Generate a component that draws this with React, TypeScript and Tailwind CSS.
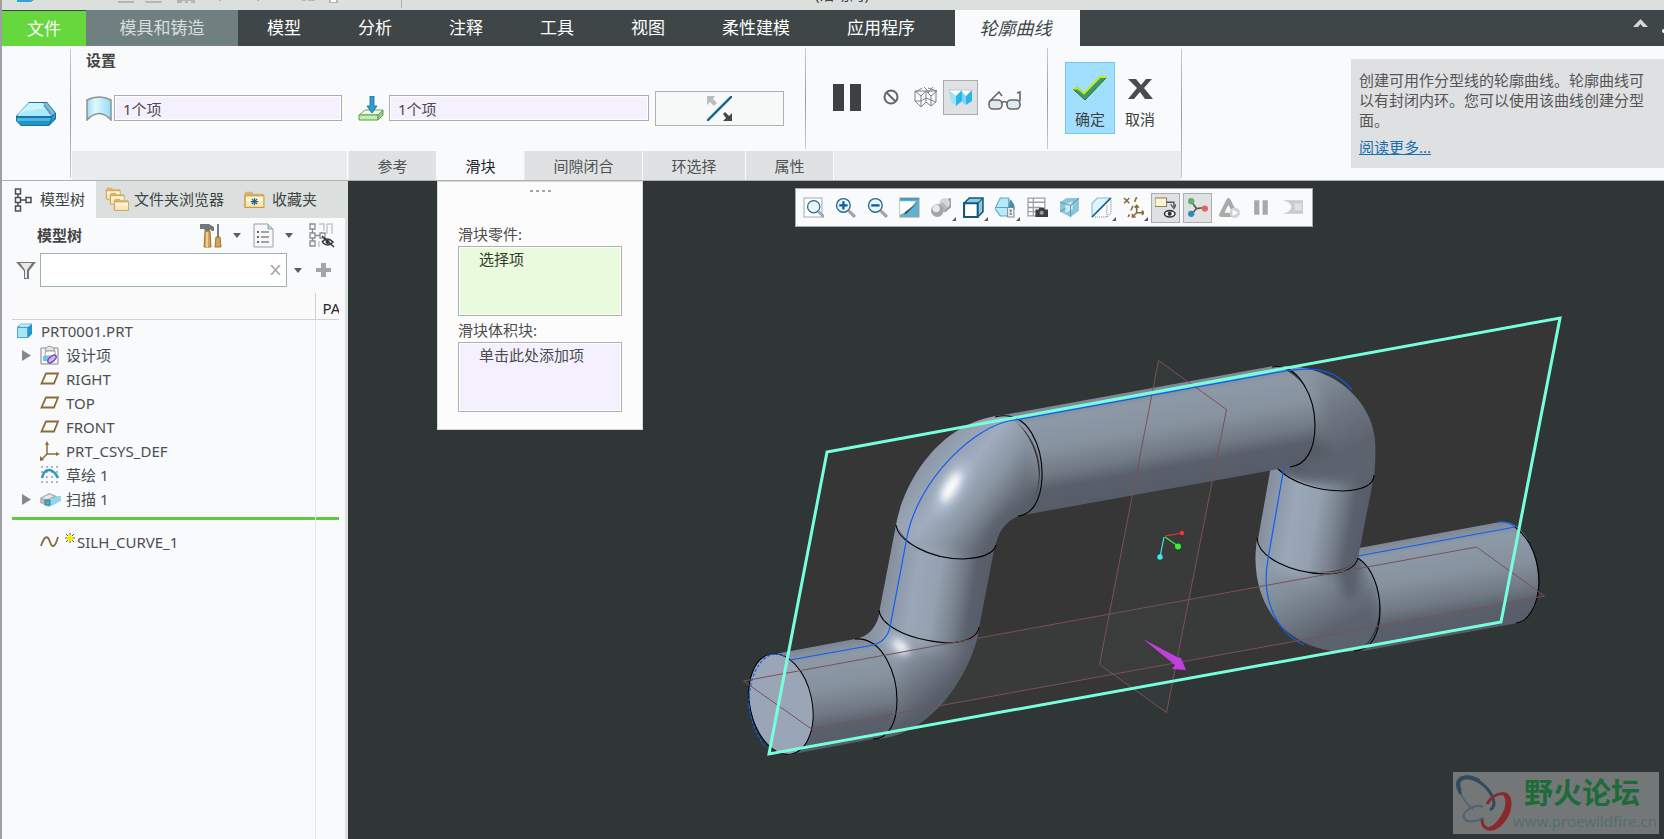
import type { ReactNode } from 'react'

const menuTabs = ['模型', '分析', '注释', '工具', '视图', '柔性建模', '应用程序']

const Separator = ({ className = '' }: { className?: string }) => (
    <div className={`w-px shrink-0 bg-gradient-to-b from-[#c9cbcd] via-[#97999b] to-[#c9cbcd] ${className}`} />
)

const Caret = () => (
    <svg width="8" height="5" viewBox="0 0 8 5"><path d="M0 0h8L4 5z" fill="#5c5c5c" /></svg>
)

const TitleStrip = () => (
    <div className="relative h-[10px] shrink-0 overflow-hidden bg-[#dbe0df]">
        <svg width="420" height="10" viewBox="2 0 420 10" className="absolute left-0 top-0">
            <path d="M17 0h17l-3 2H17z" fill="#2fa4d6" />
            <g fill="#b4b6b6">
                <path d="M118 1h16v2h-16zM145 1h17v1l-2 1h-13l-2-1zM177 0h18v3h-4V1h-3v2h-3V1h-3v2h-5zM302 0h4v1h-4zM308 0h7v1h-7zM329 0h9v3h-9z" />
                <path d="M219 0h2v1h-2zM257 0h2v1h-2z" />
            </g>
            <path d="M331 0h5v2h-5z" fill="#fff" />
            <path d="M401.500 0v8" stroke="#a9adad" />
        </svg>
        <div className="absolute -top-[16px] left-1/2 -translate-x-[18px] text-[15px] leading-[20px] text-[#444]">(活动的)</div>
    </div>
)

const MenuBar = () => (
    <nav className="flex h-[36px] shrink-0 bg-[#3e4647] text-[17px] text-white">
        <button className="w-[84px] border-t border-[#3e4647] bg-[#66d73c]">文件</button>
        <button className="w-[152px] bg-[#707f80] text-[#d6dedd]">模具和铸造</button>
        {menuTabs.map(tab => (
            <button key={tab} className="pl-[29px] pr-[28px]">{tab}</button>
        ))}
        <button className="ml-3 w-[125px] bg-[#f8fafc] pr-1 text-[18px] italic text-[#3e4647]">轮廓曲线</button>
        <button aria-label="最小化功能区" className="ml-auto mr-[14px] flex w-[15px] items-start pt-[9px]">
            <svg width="15" height="9" viewBox="0 0 15 9"><path d="M7.500 0L15 8h-5L7.500 5 5 8H0z" fill="#d5d8d8" /></svg>
        </button>
        <svg width="2" height="36" viewBox="0 0 2 36"><circle cx="2" cy="21" r="2" fill="#fff" /></svg>
    </nav>
)

const WedgeIcon = () => (
    <svg width="41" height="26" viewBox="0 0 41 26">
        <path d="M0 15L13 1h18l9 11v6l-7 7H5l-5-5z" fill="#1675a3" />
        <path d="M1 15L13 2h14l8 13z" fill="#abe9fd" />
        <path d="M1 14L13 2h14l4 5-22 3z" fill="#cdf4ff" />
        <path d="M27 2h4l8 10-4 3z" fill="#7fbcd8" />
        <path d="M28 4l7 9" stroke="#5f9cba" strokeWidth="2" />
        <path d="M1 17h34l-3 7H6l-5-4z" fill="#49b8e5" />
        <path d="M2 20h32l-2 4H6z" fill="#2493c4" />
        <path d="M36 16l3-3v4l-4 5z" fill="#3299c6" />
    </svg>
)

const SurfaceIcon = () => (
    <svg width="26" height="25" viewBox="0 0 26 25">
        <defs>
            <linearGradient id="surf">
                <stop offset="0" stopColor="#9fdcf2" />
                <stop offset=".35" stopColor="#e3f8ff" />
                <stop offset="1" stopColor="#8fdcf8" />
            </linearGradient>
        </defs>
        <path d="M1 4q12-6 24 0v20q-12-13-24 0z" fill="url(#surf)" stroke="#8f9293" strokeWidth="1.500" />
    </svg>
)

const PullIcon = () => (
    <svg width="26" height="25" viewBox="0 0 26 25">
        <path d="M1 19l6-5h18l-5 5z" fill="#e8fadf" stroke="#7aa171" />
        <path d="M1 19h19v5H1z" fill="#bff0b2" stroke="#5f9a55" />
        <path d="M20 19l5-5v5l-5 5z" fill="#97cf8c" stroke="#5f9a55" />
        <path d="M12 0h4v10h3l-5 7-5-7h3z" fill="#2f9ed2" stroke="#14648f" strokeWidth=".8" />
    </svg>
)

const Collector = ({ id, label, icon, className }: { id: string; label: string; icon: ReactNode; className: string }) => (
    <div className="mt-1 flex items-center">
        <label htmlFor={id} aria-label={label}>{icon}</label>
        <input
            id={id}
            readOnly
            value="1个项"
            className={`h-[26px] border border-[#abadb0] bg-[#f4f0fd] pl-2 text-[15px] text-[#4c4c4c] shadow-[inset_0_0_0_1px_#fff] outline-none ${className}`}
        />
    </div>
)

const subTabs = [
    { name: '参考', width: 'w-[87px]' },
    { name: '滑块', width: 'w-[87px]', active: true },
    { name: '间隙闭合', width: 'w-[117px]' },
    { name: '环选择', width: 'w-[102px]' },
    { name: '属性', width: 'w-[87px]' },
]

const Controls = () => (
    <div className="flex h-[105px]">
        <div className="w-[733px] pl-[14px] pt-1">
            <h2 className="text-[15px] font-bold leading-[20px] text-[#444]">设置</h2>
            <div className="mt-[21px] flex items-start">
                <Collector id="surface" label="曲面" icon={<SurfaceIcon />} className="ml-[2px] w-[228px]" />
                <div className="w-4" />
                <Collector id="direction" label="方向" icon={<PullIcon />} className="ml-[5px] w-[260px]" />
                <button aria-label="反向" className="ml-[6px] flex h-[35px] w-[129px] items-center justify-center border border-[#b0b1b2] bg-[#f7f8f8]">
                    <svg width="25" height="25" viewBox="0 0 25 25">
                        <path d="M0 25L25 0" stroke="#16688f" strokeWidth="2.500" />
                        <path d="M0 0h8L6 3l4 4-3 3-4-4-3 3z" fill="#bcbcbc" />
                        <path d="M25 25h-9l3-3-3-4 2-2 4 4 3-3z" fill="#464646" />
                    </svg>
                </button>
            </div>
        </div>
        <Separator className="my-[2px]" />
        <div className="flex w-[241px] items-start pl-[27px]">
            <button aria-label="暂停" className="mt-[38px]">
                <svg width="29" height="27" viewBox="0 0 29 27"><path d="M0 0h11v27H0zM17 0h11v27H17z" fill="#3e4041" /></svg>
            </button>
            <button aria-label="无预览" className="ml-[21px] mt-[43px]">
                <svg width="16" height="16" viewBox="0 0 16 16" fill="none" stroke="#666" strokeWidth="2">
                    <circle cx="8" cy="8" r="6.500" /><path d="M3.500 3.500l9 9" />
                </svg>
            </button>
            <button aria-label="线框预览" className="ml-[14px] mt-[41px]">
                <svg width="25" height="21" viewBox="0 0 25 21" fill="none" stroke="#808080" strokeWidth="1">
                    <path d="M2 4l6 5 5-5 5 5 6-5M2 4v10l6 6 5-5V4M8 9v11M13 15l5 4 5-4V4M18 9v10M2 4h22M9 1l-6 4M15 1l9 3M11 0l5 5M20 0l-5 6M2 14h6l5-3 10 4" />
                </svg>
            </button>
            <button aria-label="着色预览" aria-pressed="true" className="ml-[5px] mt-[34px] flex h-[35px] w-[35px] items-center justify-center border border-[#a9abad] bg-[#dfe1e3]">
                <svg width="24" height="18" viewBox="0 0 24 18">
                    <path d="M0 1h13l-6 6z" fill="#fff" /><path d="M0 1l7 6v10l-5-4z" fill="#9be2fb" />
                    <path d="M7 7l6-6v11l-6 5z" fill="#2fb4ea" />
                    <path d="M12 1h12l-7 6z" fill="#fff" /><path d="M13 3l4 4v9l-4-3z" fill="#7fd5f5" />
                    <path d="M17 7l6-6v11l-6 4z" fill="#2fb4ea" />
                    <path d="M0 1h24" stroke="#c0c6ca" />
                </svg>
            </button>
            <button aria-label="校验" className="ml-[10px] mt-[45px]">
                <svg width="34" height="19" viewBox="0 0 34 19" fill="none" stroke="#666" strokeWidth="1.600">
                    <rect x="1" y="9" width="13" height="9" rx="4" fill="#dfe9f0" />
                    <rect x="19" y="9" width="13" height="9" rx="4" fill="#dfe9f0" />
                    <path d="M1 11L11 1l3 4M32 10V1l-3 1M14 12q2.500-3 5 0" />
                </svg>
            </button>
        </div>
        <Separator className="my-[2px]" />
        <div className="flex items-start pl-[17px] pt-4 text-[15px] leading-[20px] text-[#3d3f40]">
            <button className="flex h-[72px] w-[50px] flex-col items-center border border-[#6ccbf8] bg-[#a2dffe] pt-[13px]">
                <svg width="36" height="25" viewBox="0 0 36 25">
                    <path d="M1 13l5-1 6 5L28 1l7 0L13 24z" fill="#3c9a63" stroke="#276d45" />
                    <path d="M1 12.500h5l6 5L28 1h7" fill="none" stroke="#c6e91a" strokeWidth="1.800" />
                </svg>
                <span className="mt-2">确定</span>
            </button>
            <button className="flex h-[72px] w-[50px] flex-col items-center pt-[17px]">
                <svg width="25" height="20" viewBox="0 0 25 20"><path d="M0 0h8l5 6 5-6h6l-8 9 9 11h-8l-5-7-6 7H0l9-11z" fill="#4b4c4d" /></svg>
                <span className="mt-[10px]">取消</span>
            </button>
        </div>
    </div>
)

const Ribbon = () => (
    <div className="flex h-[135px] shrink-0 border-b border-[#abb3b4] bg-[#f8fafc]">
        <div className="flex w-[68px] items-center justify-center pt-[2px]">
            <WedgeIcon />
        </div>
        <Separator className="mb-[2px] mt-[3px]" />
        <div className="ml-px flex w-[1109px] flex-col">
            <Controls />
            <div className="flex flex-1 gap-px bg-[#e9ebed] text-[15px] text-[#505254]">
                <div className="w-[276px] border-r border-white" />
                {subTabs.map(tab => (
                    <button
                        key={tab.name}
                        className={`${tab.width} pt-[2px] ${tab.active ? 'bg-[#f8fafc] text-[#222]' : 'bg-[#dfe1e3] shadow-[1px_0_0_#f8fafc]'}`}
                    >
                        {tab.name}
                    </button>
                ))}
            </div>
        </div>
        <Separator className="mb-[2px] mt-[3px]" />
        <aside className="ml-auto mt-[13px] h-[109px] w-[313px] bg-[#dfe0e2] pl-2 pr-5 pt-[11px] text-[15px] leading-[20px] text-[#555]">
            <p>创建可用作分型线的轮廓曲线。轮廓曲线可以有封闭内环。您可以使用该曲线创建分型面。</p>
            <a href="#more" className="mt-[7px] block text-[#1a70ae] underline">阅读更多...</a>
        </aside>
    </div>
)

const Folder = ({ children }: { children?: ReactNode }) => (
    <>
        <path d="M1 3l2-2h6l1 2h10v13H1z" fill="#d9b36c" />
        <path d="M2 5h18v11H2z" fill="#fbe6b4" stroke="#c39c58" />
        <path d="M3 6h16v4H3z" fill="#fff4d6" />
        {children}
    </>
)

const PlaneIcon = () => (
    <svg width="20" height="14" viewBox="0 0 20 14"><path d="M6 1.500h12l-4 10H1.500z" fill="none" stroke="#8a6c38" strokeWidth="1.800" /></svg>
)

const CsysIcon = () => (
    <svg width="20" height="20" viewBox="0 0 20 20" fill="#8a6c38" stroke="#8a6c38">
        <path d="M7 2v11h11M7 13l-5 5" fill="none" strokeWidth="1.500" />
        <path d="M7 0l2 4H5zM20 13l-4 2v-4zM0 20v-5l4 4z" stroke="none" />
    </svg>
)

const DesignIcon = () => (
    <svg width="20" height="20" viewBox="0 0 20 20">
        <rect x="1" y="3" width="17" height="16" rx="1" fill="#fafafa" stroke="#a9a9a9" strokeWidth="1.500" />
        <path d="M5 6q0-4 5-5 4 1 5 5z" fill="#e5e5e5" stroke="#9a9a9a" />
        <path d="M5 8l2-2h8v5H5z" fill="#fff" stroke="#888" strokeWidth=".8" />
        <path d="M3 11h9l-2 5H3z" fill="#69c4ea" />
        <ellipse cx="12" cy="14" rx="5" ry="2.500" transform="rotate(-40 12 14)" fill="#d2b8ee" stroke="#7653b8" strokeWidth="1.500" />
    </svg>
)

const SketchIcon = () => (
    <svg width="20" height="18" viewBox="0 0 20 18">
        <g fill="#b5b5b5">
            {[1, 6, 11, 16].map(x => [0, 5, 10, 15].map(y => <rect key={`${x}-${y}`} x={x} y={y} width="2" height="2" />))}
        </g>
        <path d="M2 12Q4 4 9 4q5 0 9 8" fill="none" stroke="#2f97c8" strokeWidth="2.500" />
    </svg>
)

const SweepIcon = () => (
    <svg width="21" height="15" viewBox="0 0 21 15">
        <path d="M0 6l9-5 8 3v7l-8 4-9-4z" fill="#b6babc" />
        <path d="M1 6l8-4 6 2-8 4z" fill="#e6e8e9" stroke="#999" strokeWidth=".7" />
        <path d="M9 7l6-1 2-2h4v5l-11 5z" fill="#8fd6ee" />
        <path d="M5 8h5v5H5z" fill="#58aacb" stroke="#317e9f" />
    </svg>
)

const CurveIcon = () => (
    <svg width="20" height="12" viewBox="0 0 20 12"><path d="M1 10C5-2 8 0 10 6s5 6 8-5" fill="none" stroke="#8a6c38" strokeWidth="1.800" /></svg>
)

const treeItems: { name: string; icon: ReactNode; open?: boolean }[] = [
    { name: '设计项', icon: <DesignIcon />, open: false },
    { name: 'RIGHT', icon: <PlaneIcon /> },
    { name: 'TOP', icon: <PlaneIcon /> },
    { name: 'FRONT', icon: <PlaneIcon /> },
    { name: 'PRT_CSYS_DEF', icon: <CsysIcon /> },
    { name: '草绘 1', icon: <SketchIcon /> },
    { name: '扫描 1', icon: <SweepIcon />, open: false },
]

const ModelTree = () => (
    <table className="ml-[10px] mr-[6px] w-[327px] table-fixed border-collapse text-left text-[15px] leading-[20px] text-[#4c4e50]">
        <thead>
            <tr className="h-[26px] border-b border-[#cfd2d3] bg-[#fafafa]">
                <th className="w-[303px] border-r border-[#cfd2d3]" aria-label="名称" />
                <th className="overflow-hidden whitespace-nowrap p-0 pl-[7px] pt-1 font-normal text-[#2a2a2a]">PA</th>
            </tr>
        </thead>
        <tbody>
            <tr className="h-6">
                <td className="border-r border-[#e6e9eb] p-0">
                    <div className="flex items-center gap-2 pl-1">
                        <svg width="17" height="16" viewBox="0 0 17 16">
                            <path d="M1 4l4-3h11v10l-4 4H1z" fill="#2397cb" />
                            <path d="M1.500 4.500h10v10h-10z" fill="#a5e6fb" stroke="#4aa9d0" /><path d="M2 4l3-3h11l-4 3z" fill="#d5f5ff" stroke="#4a9fc2" strokeWidth=".7" />
                        </svg>
                        <span>PRT0001.PRT</span>
                    </div>
                </td>
                <td />
            </tr>
            {treeItems.map(item => (
                <tr key={item.name} className="h-6">
                    <td className="border-r border-[#e6e9eb] p-0">
                        <div className="flex items-center">
                            <div className="flex w-7 pl-[10px]">
                                {item.open === false && (
                                    <button aria-label={`展开 ${item.name}`}>
                                        <svg width="9" height="11" viewBox="0 0 9 11"><path d="M0 0l9 5.500L0 11z" fill="#858789" /></svg>
                                    </button>
                                )}
                            </div>
                            <div className="w-[26px]">{item.icon}</div>
                            <span>{item.name}</span>
                        </div>
                    </td>
                    <td />
                </tr>
            ))}
            <tr className="h-[19px] align-top">
                <td className="border-r border-[#e6e9eb] p-0 pt-[6px]"><div className="h-[3px] bg-[#62c93f]" /></td>
                <td className="p-0 pt-[6px]"><div className="h-[3px] bg-[#62c93f]" /></td>
            </tr>
            <tr className="h-6">
                <td className="border-r border-[#e6e9eb] p-0">
                    <div className="flex items-center pl-7">
                        <CurveIcon />
                        <svg width="10" height="10" viewBox="0 0 10 10" className="mb-2 ml-[5px] mr-[2px]">
                            <path d="M5 0v10M0 5h10M1 1l8 8M9 1L1 9" stroke="#555" strokeWidth="1" />
                            <circle cx="5" cy="5" r="3" fill="#ffee00" />
                        </svg>
                        <span>SILH_CURVE_1</span>
                    </div>
                </td>
                <td />
            </tr>
        </tbody>
    </table>
)

const Sidebar = () => (
    <aside className="flex w-[346px] shrink-0 flex-col border-r-[3px] border-[#dbe0df] bg-[#f8fafc]">
        <div className="flex h-[37px] bg-[#dbe0df] text-[15px] text-[#3f4445]">
            <button className="flex w-[94px] items-center bg-[#f8fafc] pl-3">
                <svg width="18" height="24" viewBox="0 0 18 24" fill="none" stroke="#4c4e50" strokeWidth="1.500">
                    <path d="M1.500 1h5v5h-5zM1.500 9.500h5v5h-5zM1.500 18h5v5h-5zM12 9.500h5v5h-5zM4 6v3.500M4 14.500V18M6.500 12H12" />
                </svg>
                <span className="ml-2">模型树</span>
            </button>
            <button className="flex items-center pl-[9px]">
                <svg width="25" height="25" viewBox="0 0 25 25">
                    <g transform="scale(.76)"><Folder /></g>
                    <g transform="translate(4 5) scale(.76)"><Folder /></g>
                    <g transform="translate(8 11) scale(.78)"><Folder /></g>
                </svg>
                <span className="ml-1">文件夹浏览器</span>
            </button>
            <button className="flex items-center pl-[19px]">
                <svg width="22" height="19" viewBox="0 0 21 17">
                    <Folder><path d="M11 7v7M7.500 10.500h7M8.500 8l5 5M13.500 8l-5 5" stroke="#1e6b8b" strokeWidth="1.100" /></Folder>
                </svg>
                <span className="ml-[7px]">收藏夹</span>
            </button>
        </div>
        <div className="flex h-[35px] items-center pl-[35px]">
            <h2 className="text-[15px] font-bold text-[#444]">模型树</h2>
            <div className="ml-auto mr-[10px] flex items-center">
                <button aria-label="设置">
                    <svg width="22" height="26" viewBox="0 0 22 26">
                        <path d="M0 1h9l5 3v4h-2l-2-2v2H5L4 6H0z" fill="#73777b" />
                        <path d="M5 8h5l1 16H4z" fill="#d3a55b" stroke="#9a763a" />
                        <path d="M6 9h2v15H6z" fill="#edcd90" />
                        <path d="M17 1h2v13h-2z" fill="#7b7f82" />
                        <path d="M16 14h4l1 10h-6z" fill="#d3a55b" stroke="#9a763a" />
                    </svg>
                </button>
                <button aria-label="设置菜单" className="ml-[11px]"><Caret /></button>
                <button aria-label="显示" className="ml-3">
                    <svg width="22" height="25" viewBox="0 0 22 25">
                        <path d="M1 1h14l5 5v18H1z" fill="#f5f7f8" stroke="#9ba1a3" />
                        <path d="M15 1v5h5" fill="#a5d5e8" stroke="#9ba1a3" />
                        <path d="M8 9h8M8 14h8M8 19h8" stroke="#888" strokeWidth="1.500" />
                        <path d="M4 8h2v2H4zM4 13h2v2H4zM4 18h2v2H4z" fill="#666" />
                    </svg>
                </button>
                <button aria-label="显示菜单" className="ml-[10px]"><Caret /></button>
                <button aria-label="树列" className="ml-4">
                    <svg width="26" height="25" viewBox="0 0 26 25" fill="none">
                        <path d="M1 1h5v5H1zM1 10h5v5H1zM1 18h5v5H1zM11 10h5v5h-5zM3.500 6v4M3.500 15v3M6 12.500h5" stroke="#8a8c8e" strokeWidth="1.300" />
                        <path d="M10 1h5v7M10 18v6M18 1h5v10M18 1v10" stroke="#c6c8ca" strokeWidth="1.500" />
                        <path d="M13 19q5-6 11 0-5 6-11 0M13 13l12 11" stroke="#333" strokeWidth="1.500" />
                        <circle cx="18.500" cy="19" r="2" fill="#333" />
                    </svg>
                </button>
            </div>
        </div>
        <div className="flex h-[34px] items-center pl-[14px]">
            <svg width="20" height="18" viewBox="0 0 20 18">
                <path d="M0 1h20l-7 9v8H8v-8z" fill="#777" /><path d="M4 2h12l-5 7v8H9V9z" fill="#e9e9e9" />
            </svg>
            <div className="relative ml-1">
                <input aria-label="筛选" className="block h-[34px] w-[247px] border border-[#9fb0b1] bg-white px-2 pr-8 text-[15px] outline-none" />
                <button aria-label="清除" className="absolute right-[6px] top-3 flex">
                    <svg width="11" height="10" viewBox="0 0 11 10"><path d="M1 0l9 10M10 0L1 10" stroke="#aaa" strokeWidth="1.800" /></svg>
                </button>
            </div>
            <button aria-label="筛选选项" className="ml-[7px]"><Caret /></button>
            <button aria-label="添加" className="ml-[14px]">
                <svg width="15" height="14" viewBox="0 0 15 14"><path d="M5 0h5v5h5v4h-5v5H5V9H0V5h5z" fill="#a2a4a5" /></svg>
            </button>
        </div>
        <div className="mt-[6px]">
            <ModelTree />
        </div>
        <div className="ml-[10px] w-[304px] flex-1 border-r border-[#e6e9eb]" />
    </aside>
)

const SliderPanel = () => (
    <section className="absolute left-[89px] top-0 h-[249px] w-[206px] border border-[#d5d7d8] bg-[#fcfcfc] text-[15px] leading-[20px] text-[#4c4c4c]">
        <div className="mt-[8px] flex justify-center gap-[3px]">
            {[0, 1, 2, 3].map(i => <i key={i} className="h-[2px] w-[3px] bg-[#a5a7a8]" />)}
        </div>
        <div className="mt-8 flex flex-col px-5">
            <label htmlFor="slider-part">滑块零件:</label>
            <textarea
                id="slider-part"
                readOnly
                value="选择项"
                className="mt-[2px] h-[70px] resize-none border border-[#aeb0b3] bg-[#eafbdd] pl-5 pt-[2px] text-[#2f3a2f] shadow-[inset_0_0_0_1px_#fff] outline-none"
            />
            <label htmlFor="slider-volume" className="mt-1">滑块体积块:</label>
            <textarea
                id="slider-volume"
                readOnly
                value="单击此处添加项"
                className="mt-[2px] h-[70px] resize-none border border-[#aeb0b3] bg-[#f4f0fd] pl-5 pt-[2px] shadow-[inset_0_0_0_1px_#fff] outline-none"
            />
        </div>
    </section>
)

const magnifier = <><circle cx="8" cy="8" r="6.500" fill="#eaf6fc" stroke="#236a8f" strokeWidth="1.300" /><path d="M13 13l6 6" stroke="#a3a5a6" strokeWidth="3" /></>

const viewTools: { name: string; active?: boolean; menu?: boolean; icon: ReactNode }[] = [
    { name: '重新调整', icon: <><path d="M1 1h17v18H1z" fill="#fff" stroke="#aaa" /><g transform="translate(3 2) scale(.9)">{magnifier}</g></> },
    { name: '放大', icon: <>{magnifier}<path d="M4 8h8M8 4v8" stroke="#0d5f91" strokeWidth="2.200" /></> },
    { name: '缩小', icon: <>{magnifier}<path d="M4 8h8" stroke="#0d5f91" strokeWidth="2.200" /></> },
    { name: '重画', icon: <><path d="M1 1h18v18H1z" fill="#5bb4d6" stroke="#999" /><path d="M1 4h15q-5 9-15 13z" fill="#fff" /><path d="M18 5L7 16l-2 1 1-3z" fill="#4d4f50" /><path d="M1 1h18v2H1z" fill="#4c9abb" /></> },
    { name: '着色', menu: true, icon: <><path d="M10 3l9-2v9l-6 5z" fill="#9a9c9d" /><circle cx="13" cy="6" r="5" fill="#d5d6d6" /><path d="M6 8l5-3 5 5-4 4z" fill="#b5b7b8" /><circle cx="6" cy="13" r="6" fill="#a2a4a5" /><circle cx="5" cy="11" r="3.500" fill="#e8e8e8" /></> },
    { name: '已保存方向', menu: true, icon: <><path d="M1 6l5-5h13v13l-5 5H1z" fill="#8fc9de" stroke="#14587c" strokeWidth="1.500" /><path d="M1 6h13v13H1z" fill="#fff" stroke="#14587c" strokeWidth="2" /><path d="M14 6l5-5" stroke="#14587c" /></> },
    { name: '视图管理器', menu: true, icon: <><path d="M5 1h8v17H5l-5-7z" fill="#b9e9f8" stroke="#58a8c6" /><path d="M0 10h13" stroke="#58a8c6" /><path d="M14 2q5 4 5 10h-6z" fill="#3d8fb4" /><path d="M12 10h6v9h-6z" fill="#f3f3f3" stroke="#888" /><path d="M14 12h2v2h-2zM14 15h2v2h-2z" fill="#777" /></> },
    { name: '图像', icon: <><path d="M1 1h16v17H1zM1 5h16M1 10h12M1 14h7M6 1v17" fill="#fff" stroke="#9b9d9e" strokeWidth="1.200" /><path d="M8 12h3l1-2h4l1 2h3v7H8z" fill="#3c3e3f" /><circle cx="14" cy="15" r="2" fill="#9b9d9e" /></> },
    { name: '透视图', icon: <><path d="M1 5l6-4h12v12l-8 6L1 14z" fill="#8cc4da" /><path d="M6 7l7-3v8l-7 3z" fill="#cfeaf4" /><path d="M1 5l10 3 8-7M11 8v11M1 14l5-3" stroke="#5c9db8" fill="none" /></> },
    { name: '截面', menu: true, icon: <><path d="M1 6l5-5h12L1 19z" fill="#dff4fb" stroke="#7dbdd5" /><path d="M19 3v12l-4 4H3M15 8v11" fill="none" stroke="#aaa" strokeDasharray="1 1" strokeWidth="1.500" /><path d="M1 19L19 1" stroke="#15597c" strokeWidth="1.500" /></> },
    { name: '基准显示', menu: true, icon: <g fill="none" stroke="#8a6c38" strokeWidth="1.500"><path d="M1 1l5 5M6 1L1 6" /><path d="M13 0L5 19" strokeDasharray="5 4" /><path d="M13 8v7h7M13 15l-4 4M11 10l2-2 2 2M18 13l2 2-2 2M9 16v3h3" /></g> },
    { name: '注释显示', active: true, icon: <><path d="M0 1h11v8H0z" fill="#fff4d2" stroke="#8d8268" /><path d="M11 5h7v4M15 7l3 4 2-4" fill="none" stroke="#555" strokeWidth="1.300" /><ellipse cx="14" cy="16" rx="5" ry="3" fill="#fff" stroke="#333" strokeWidth="1.500" /><circle cx="14" cy="16" r="2" fill="#333" /></> },
    { name: '旋转中心', active: true, icon: <><path d="M4 4l5 7 8-1M9 11l-5 6" stroke="#555" strokeWidth="1.500" fill="none" /><circle cx="4" cy="4" r="3" fill="#59b46a" /><circle cx="17" cy="11" r="3" fill="#e2635f" /><circle cx="4" cy="16" r="3" fill="#3489b7" /></> },
    { name: '仿真', icon: <><path d="M9 3l7 14H2z" fill="none" stroke="#aaa" strokeWidth="4" strokeLinejoin="round" /><circle cx="15" cy="15" r="5" fill="#d0d2d3" /><path d="M13 12l5 3-5 3z" fill="#fff" /></> },
    { name: '暂停仿真', icon: <path d="M3 3h5v14H3zM11 3h5v14h-5z" fill="#a6a8a9" /> },
    { name: '结果', icon: <><path d="M0 3h19v13H0q8-2 8-6.500T0 3z" fill="#c7c9ca" /><path d="M11 6h7v7h-7z" fill="#dedfe0" /></> },
]

const ViewToolbar = () => (
    <div className="absolute left-[447px] top-[7px] flex h-[39px] w-[518px] items-center gap-[3px] border border-[#a5a9aa] bg-[#f8fafc] pl-[3px]">
        {viewTools.map(tool => (
            <button
                key={tool.name}
                aria-label={tool.name}
                className={`relative flex h-[30px] w-[29px] shrink-0 items-center justify-center ${tool.active ? 'border border-[#aaacae] bg-[#dfe1e3]' : ''}`}
            >
                <svg width="21" height="21" viewBox="0 0 20 20">{tool.icon}</svg>
                {tool.menu && (
                    <svg width="4" height="4" className="absolute bottom-[2px] right-0"><path d="M4 0v4H0z" fill="#555" /></svg>
                )}
            </button>
        ))}
    </div>
)

const elbowUpper = 'M896 525C903 485 938 420 1005 415C1032 425 1058 488 1018 516C1004 522 997 534 995 548C975 566 915 563 896 525Z'
const elbowLower = 'M855 639C868 637 877 628 880 611C885 640 970 655 979 627C975 665 935 738 873 739C908 722 903 638 855 639Z'
const elbowRight = 'M1272 367C1330 360 1372 400 1375 440C1376 455 1375 468 1374 478C1358 502 1300 486 1278 469L1290 467C1330 450 1315 382 1288 369Z'
const elbowBottom = 'M1257 540C1270 572 1345 585 1358 558C1385 575 1388 635 1357 651C1300 658 1246 615 1257 540Z'

const PipeModel = () => (
    <svg viewBox="348 181 1316 658" preserveAspectRatio="xMinYMin slice" className="absolute inset-0 h-full w-full">
        <defs>
            <linearGradient id="across" gradientUnits="userSpaceOnUse" x1="1128" y1="393" x2="1146" y2="492">
                <stop offset="0" stopColor="#7d8795" />
                <stop offset=".12" stopColor="#8e99a8" />
                <stop offset=".4" stopColor="#87929f" />
                <stop offset=".65" stopColor="#707984" />
                <stop offset=".8" stopColor="#59606b" />
                <stop offset="1" stopColor="#565d68" />
            </linearGradient>
            <linearGradient id="acrossLeft" href="#across" x1="823" y1="646" x2="841" y2="747" />
            <linearGradient id="acrossRight" href="#across" x1="1430" y1="535" x2="1448" y2="637" />
            <linearGradient id="upright" gradientUnits="userSpaceOnUse" x1="887" y1="577" x2="988" y2="594">
                <stop offset="0" stopColor="#868f9f" />
                <stop offset=".28" stopColor="#9aa7b8" />
                <stop offset=".5" stopColor="#95a1b0" />
                <stop offset=".68" stopColor="#7b8591" />
                <stop offset=".85" stopColor="#5a616c" />
                <stop offset="1" stopColor="#565d68" />
            </linearGradient>
            <linearGradient id="uprightRight" href="#upright" x1="1265" y1="507" x2="1367" y2="525" />
            <linearGradient id="bendUpper" gradientUnits="userSpaceOnUse" x1="920" y1="455" x2="1015" y2="530">
                <stop offset="0" stopColor="#8a93a3" />
                <stop offset=".38" stopColor="#a0adbe" />
                <stop offset=".6" stopColor="#8b97a4" />
                <stop offset=".82" stopColor="#68707b" />
                <stop offset="1" stopColor="#575e69" />
            </linearGradient>
            <linearGradient id="bendLower" gradientUnits="userSpaceOnUse" x1="872" y1="630" x2="940" y2="710">
                <stop offset="0" stopColor="#8d97a6" />
                <stop offset=".3" stopColor="#929eac" />
                <stop offset=".65" stopColor="#6f7883" />
                <stop offset=".9" stopColor="#575e69" />
            </linearGradient>
            <linearGradient id="bendRight" gradientUnits="userSpaceOnUse" x1="1305" y1="365" x2="1350" y2="450">
                <stop offset="0" stopColor="#8e99a8" />
                <stop offset=".5" stopColor="#717a85" />
                <stop offset="1" stopColor="#5c636e" />
            </linearGradient>
            <linearGradient id="bendBottom" gradientUnits="userSpaceOnUse" x1="1275" y1="555" x2="1325" y2="652">
                <stop offset="0" stopColor="#929eae" />
                <stop offset=".4" stopColor="#808b98" />
                <stop offset=".85" stopColor="#5c636e" />
            </linearGradient>
            <filter id="soft" x="-1" y="-1" width="3" height="3"><feGaussianBlur stdDeviation="6" /></filter>
            <filter id="glint" x="-1" y="-1" width="3" height="3"><feGaussianBlur stdDeviation="3.500" /></filter>
            <clipPath id="clipRight"><path d={elbowRight} /></clipPath>
            <clipPath id="clipBottom"><path d={elbowBottom} /></clipPath>
            <clipPath id="clipUpper"><path d={elbowUpper} /></clipPath>
            <clipPath id="clipLower"><path d={elbowLower} /></clipPath>
        </defs>

        {/* datum planes behind the solid */}
        <path d="M827 452L1560 318 1501 622 769 754z" fill="#363637" />
        <path d="M1158 360l69 49-60 304-68-49z" fill="#434a49" fillOpacity=".22" />
        <path d="M744 681l733-134 68 49-733 133z" fill="#434a49" fillOpacity=".22" />

        {/* straight runs and the bends between them */}
        <path d="M1359 548l141-26C1525 518 1541 560 1538 590 1536 610 1529 620 1518 623l-161 29C1395 630 1380 575 1357 558z" fill="url(#acrossRight)" />
        <path d="M1271 466l103 10-16 82c-10 22-88 18-101-13z" fill="url(#uprightRight)" />
        <path d={elbowBottom} fill="url(#bendBottom)" />
        <g clipPath="url(#clipBottom)">
            <path d="M1250 525h120l-8 48q-50 20-105-13z" fill="url(#uprightRight)" filter="url(#soft)" />
            <path d="M1362 560q32 50 0 105h40V550z" fill="url(#acrossRight)" filter="url(#soft)" />
            <ellipse cx="1350" cy="583" rx="9" ry="18" fill="#565d68" filter="url(#soft)" />
        </g>
        <path d={elbowRight} fill="url(#bendRight)" />
        <g clipPath="url(#clipRight)">
            <path d="M1265 350l30 5q50 60 8 120l-40 10z" fill="url(#across)" filter="url(#soft)" />
            <path d="M1270 474q40 18 108 4v30h-108z" fill="url(#uprightRight)" filter="url(#soft)" />
            <ellipse cx="1316" cy="452" rx="16" ry="8" fill="#555c66" filter="url(#soft)" />
            <path d="M1375 425v60" stroke="#545b65" strokeWidth="10" filter="url(#soft)" />
        </g>
        <path d="M1003 415l270-49C1322 375 1330 450 1290 467l-272 49C1055 490 1042 430 1003 415z" fill="url(#across)" />
        <path d="M896 525c18 40 80 40 99 20l-16 83c-12 24-90 20-100-15z" fill="url(#upright)" />
        <path d="M775 654l80-15C905 636 915 722 873 739l-85 16z" fill="url(#acrossLeft)" />
        <path d={elbowUpper} fill="url(#bendUpper)" />
        <g clipPath="url(#clipUpper)">
            <path d="M990 560q2-40 38-50" stroke="#59606b" strokeWidth="18" fill="none" filter="url(#soft)" />
            <path d="M1012 400q34 60 2 125h50V395z" fill="url(#across)" filter="url(#soft)" />
            <path d="M888 532q50 28 112 14v30H885z" fill="url(#upright)" filter="url(#soft)" />
            <ellipse cx="952" cy="487" rx="11" ry="30" transform="rotate(30 952 487)" fill="#b3c1d3" filter="url(#soft)" />
            <ellipse cx="951" cy="487" rx="6" ry="17" transform="rotate(31 951 487)" fill="#fff" filter="url(#glint)" />
        </g>
        <path d={elbowLower} fill="url(#bendLower)" />
        <g clipPath="url(#clipLower)">
            <path d="M885 735q68-8 92-95" stroke="#565d68" strokeWidth="14" fill="none" filter="url(#soft)" />
            <path d="M845 630q75 10 40 120h-50z" fill="url(#acrossLeft)" filter="url(#soft)" />
            <path d="M890 615l90 10-4 22q-40 12-80-8z" fill="url(#upright)" filter="url(#soft)" />
            <ellipse cx="898" cy="645" rx="7" ry="14" transform="rotate(-50 898 645)" fill="#b9c6d7" filter="url(#soft)" />
            <ellipse cx="901" cy="647" rx="4" ry="9" transform="rotate(-50 901 647)" fill="#fff" filter="url(#glint)" />
        </g>
        <ellipse cx="781" cy="704" rx="31" ry="51" transform="rotate(-12 781 704)" fill="#9aa6b7" stroke="#000" />

        {/* seam edges */}
        <g fill="none" stroke="#000" strokeWidth="1.100">
            <path d="M855 639C884 637 897 676 897 700C897 722 889 739 873 739" />
            <path d="M879 610C880 622 900 639 947 643C970 642 978 636 979 627" />
            <path d="M896 525C898 541 930 559 963 559C983 558 994 553 996 545" />
            <path d="M995 417C1030 408 1043 450 1042 478C1041 500 1032 515 1018 516" />
            <path d="M1272 367C1300 362 1315 400 1315 425C1315 450 1306 465 1290 467" />
            <path d="M1278 469C1290 481 1315 491 1343 491C1364 490 1374 484 1374 475" />
            <path d="M1257 538C1258 557 1290 573 1325 574C1345 574 1356 567 1358 558" />
            <path d="M1358 558C1373 568 1380 590 1380 610C1380 632 1372 651 1354 651" />
            <path d="M1515 527C1532 540 1539 562 1539 582C1538 608 1527 622 1516 623" />
        </g>
        <g fill="none" stroke="#0d5df5" strokeWidth="1.200">
            <path d="M790 660l78-14c14-2 21-9 23-24l16-85C918 480 975 424 1015 420l270-49C1316 366 1336 370 1352 390" />
            <path d="M1284 467l-16 92C1260 603 1279 633 1304 645M1358 556l157-29M1497 522q12-1 18 5" />
            <path d="M749 706c-1-26 10-51 26-52 6 0 10 2 14 6M749 706c3 22 12 37 18 42" strokeDasharray="3 2" />
        </g>

        <g fill="none" stroke="#7b5057" strokeWidth="1">
            <path d="M1158.500 360.500l68 49-60 303-67-48z" />
            <path d="M743.500 681l733-134 68 49-733 133z" />
        </g>
        <path d="M827 452L1560 318 1501 622 769 754z" fill="none" stroke="#76ffdc" strokeWidth="3" />

        <path d="M1143 639l34 18 4 1 5 12-14-1 3-4z" fill="#c13fdc" />
        <g fill="none" strokeWidth="1.200">
            <path d="M1165 536l17-3" stroke="#fb2f2f" />
            <path d="M1165 537l13 9" stroke="#3bef32" />
            <path d="M1164 537l-4 20" stroke="#36ecf0" />
        </g>
        <circle cx="1182" cy="533" r="2.200" fill="#fb2f2f" />
        <circle cx="1178" cy="546.500" r="3" fill="#3bef32" />
        <circle cx="1160" cy="557" r="2.700" fill="#36ecf0" />
    </svg>
)

const Watermark = () => (
    <div className="absolute bottom-[5px] right-[5px] flex h-[62px] w-[206px] bg-[#747778]">
        <svg width="60" height="62" viewBox="0 0 60 62" fill="none">
            <path d="M8 22C-2 6 14 0 28 11 40 20 45 34 37 38" stroke="#334a5d" strokeWidth="3" />
            <path d="M7 19C0 5 14 2 26 9" stroke="#334a5d" strokeWidth="4" />
            <path d="M8 22q4 9 12 15" stroke="#4a6272" strokeWidth="1.500" />
            <path d="M34 32C42 19 58 17 57 33 56 47 44 58 36 57 29 56 29 50 29 46" stroke="#8a292c" strokeWidth="3" />
            <path d="M52 22c8 12-6 33-16 35" stroke="#8a292c" strokeWidth="4" />
            <path d="M30 35c-8-4-22 5-19 11 3 6 14 3 19 0" stroke="#4a6272" strokeWidth="2" />
        </svg>
        <div className="whitespace-nowrap">
            <div className="mt-[4px] pl-[11px] text-[29px] font-bold leading-[34px] text-[#1d6b3b]">野火论坛</div>
            <div className="text-[15px] leading-[22px] text-[#526f70]">www.proewildfire.cn</div>
        </div>
    </div>
)

export default function App() {
    return (
        <div className="flex min-h-screen flex-col overflow-hidden border-l-2 border-[#9f9fa2] bg-[#303535] font-['Noto_Sans','Noto_Sans_CJK_SC',sans-serif]">
            <TitleStrip />
            <MenuBar />
            <Ribbon />
            <div className="flex flex-1">
                <Sidebar />
                <main className="relative flex-1 overflow-hidden bg-[#303535]">
                    <PipeModel />
                    <SliderPanel />
                    <ViewToolbar />
                    <Watermark />
                </main>
            </div>
        </div>
    )
}
